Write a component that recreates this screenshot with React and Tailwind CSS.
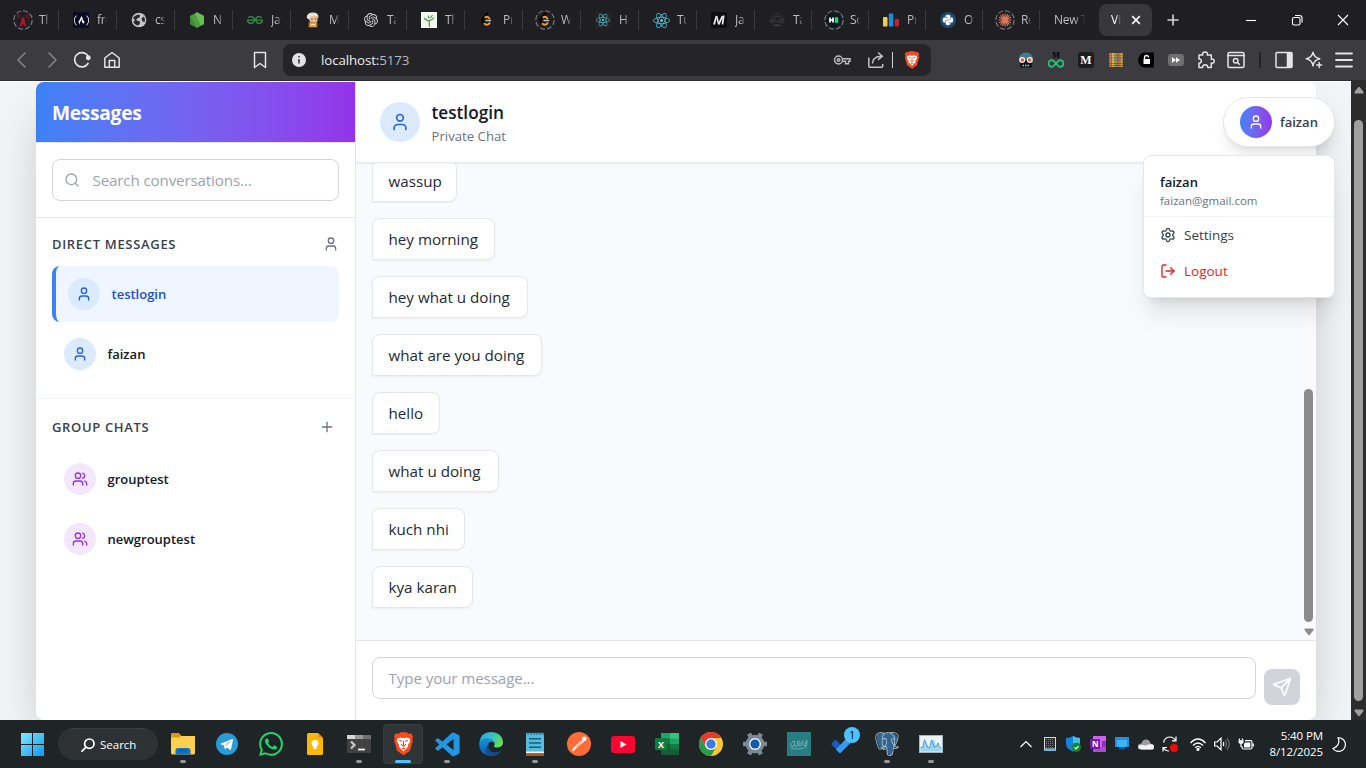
import React from "react";
import { User, Users, Search, Plus, Settings, LogOut, Send } from "lucide-react";
import {
  SiBrave, SiFreecodecamp, SiGeeksforgeeks, SiOpenai, SiReact,
  SiWhatsapp, SiPostgresql,
} from "react-icons/si";
import { BiLogoVisualStudio } from "react-icons/bi";
import { FaPython } from "react-icons/fa";

/* ---------- tab favicons ---------- */

function Ring({ children }) {
  return (
    <svg width="20" height="20" viewBox="0 0 20 20" fill="none">
      <circle cx="10" cy="10" r="9.2" stroke="#77777b" strokeWidth="1.2" strokeDasharray="5.2 2" />
      {children}
    </svg>
  );
}

const leet = (
  <g fill="none" strokeLinecap="round">
    <path d="M10.5 3.500 5.600 8.600Q4.400 10 5.600 11.600L8 14.500" stroke="#050505" strokeWidth="2" />
    <path d="M8.300 7.300q1.600-1.100 3.300.3l.8.8M7.500 13.700q2.200 2 4.200.3l.9-.9" stroke="#f0a01e" strokeWidth="1.900" />
    <path d="M9 10.600h4.500" stroke="#c2c2c2" strokeWidth="1.500" />
  </g>
);

const favicons = {
  tower: (
    <Ring>
      <path d="M8.900 7.500h2.200L12 12l1.600 4h-2.200L10 13.500 8.600 16H6.400L8 12Z" fill="#b3142c" />
      <path d="M7.200 4.400q-1.300 1.800 0 3.600M12.800 4.400q1.300 1.800 0 3.600M5.200 3.800q-2 2.600 0 5.300M14.800 3.800q2 2.600 0 5.300" stroke="#8d1526" strokeWidth="1" />
    </Ring>
  ),
  fcc: (
    <span className="flex size-4 items-center justify-center bg-[#0a0a23]">
      <SiFreecodecamp size={15} color="#fff" />
    </span>
  ),
  globe: (
    <svg width="16" height="16" viewBox="0 0 16 16">
      <circle cx="8" cy="8" r="7.300" fill="#c4c4c6" />
      <path d="M2 5.500Q5 2.500 8.500 2.500 9.500 5 7.500 6 5 6.500 5.500 8.500L9 9.500Q9.500 12 7 13.500 3 12.500 2.500 9.500l1.500-1ZM10.500 6.500l2.500-2q1.700 3 .8 5.500l-2.300-.5Z" fill="#29292d" />
    </svg>
  ),
  node: (
    <svg width="16" height="16" viewBox="0 0 16 16">
      <path d="M8 .2 15 4v8l-7 3.900L1 12V4Z" fill="#4f9e43" />
      <path d="M8 .2 15 4v8l-3 1.700L6 1.400Z" fill="#6bbd4f" />
      <path d="M1 4 8 15.900 1 12Z" fill="#3c873a" />
    </svg>
  ),
  gfg: <SiGeeksforgeeks size={16} color="#2f8d46" />,
  person: (
    <svg width="16" height="16" viewBox="0 0 16 16">
      <path d="M3.500 15.500V10h9v5.500Z" fill="#8a5a22" />
      <path d="M4.500 11h7v4h-7Z" fill="#e8a33c" />
      <rect x="4.500" y="2.500" width="8" height="8" rx="2" fill="#e9b987" />
      <path d="M1.800 6Q1.500 1 7 .5q6.500-.5 6.500 5L12.500 6l-.5-2L6 4.500 4.500 8Z" fill="#e4e2dc" />
      <path d="M6.500 7h1M10 7h1" stroke="#333" />
      <path d="M6 12.500h4" stroke="#fff3d6" />
    </svg>
  ),
  openai: <SiOpenai size={14} color="#d4d4d6" />,
  plant: (
    <svg width="16" height="16" viewBox="0 0 16 16">
      <rect width="16" height="16" fill="#f2f8ee" />
      <path d="M8.500 15q-.8-4 0-7M8.300 9Q5.500 8.500 3 6M8.500 8.500q3-.5 4.500-3M8 6.500 7.300 3.500M9.500 6l2-3" stroke="#4d9455" strokeWidth="1.200" fill="none" />
    </svg>
  ),
  leet: (
    <svg width="20" height="20" viewBox="0 0 20 20">{leet}</svg>
  ),
  leetRing: <Ring>{leet}</Ring>,
  react: (
    <span className="flex size-4 items-center justify-center bg-[#232323]">
      <SiReact size={14} color="#4fb3c8" />
    </span>
  ),
  reactBig: <SiReact size={17} color="#4fc3dc" />,
  medium: (
    <svg width="16" height="16" viewBox="0 0 16 16">
      <rect width="16" height="16" fill="#0d0d10" />
      <path d="m3 12.500 2.500-8.500M7.500 12.500l4-8.300M11.500 12.500l1.200-9" stroke="#e8e8ea" strokeWidth="1.800" fill="none" />
      <path d="m5.600 4 2 8" stroke="#e8e8ea" strokeWidth="1.500" />
    </svg>
  ),
  dim: (
    <svg width="16" height="16" viewBox="0 0 16 16" fill="none" stroke="#3d3d41">
      <circle cx="8" cy="7" r="5.500" strokeDasharray="2 1" />
      <circle cx="8" cy="7" r="3" />
      <circle cx="2.500" cy="9" r="1.700" />
      <circle cx="13.500" cy="9" r="1.700" />
      <path d="M4 13.500h8" />
    </svg>
  ),
  hacker: (
    <Ring>
      <circle cx="10" cy="10" r="7.500" fill="#071c22" />
      <path d="M6 7.500v5M9 7.500v5M6 10h3" stroke="#fff" strokeWidth="1.700" />
      <rect x="10.800" y="7.300" width="3.400" height="5.400" fill="#1fe26b" />
    </Ring>
  ),
  bars: (
    <svg width="16" height="16" viewBox="0 0 16 16">
      <rect x="0" y="5" width="4.500" height="9.500" rx="1" fill="#fbc94b" />
      <rect x="5.800" y="1.500" width="4.500" height="13" rx="1" fill="#1f8dd6" />
      <rect x="11.600" y="7" width="4.400" height="7.500" rx="1" fill="#c22033" />
    </svg>
  ),
  python: (
    <span className="flex size-4 items-center justify-center rounded-full bg-[#1d4a6b]">
      <FaPython size={12} color="#fff" />
    </span>
  ),
  claude: (
    <Ring>
      <path d="M10 3.500v13M3.500 10h13M5.400 5.400l9.200 9.200M14.600 5.400l-9.200 9.200M7.300 4l5.400 12M12.700 4 7.300 16M4 7.300l12 5.400M4 12.700l12-5.400" stroke="#d97757" strokeWidth="1.200" />
    </Ring>
  ),
};

const tabs = [
  ["tower", "Th"], ["fcc", "fre"], ["globe", "css"], ["node", "No"], ["gfg", "Jav"],
  ["person", "My"], ["openai", "Ta"], ["plant", "Th"], ["leet", "Pr"], ["leetRing", "W"],
  ["react", "Ho"], ["reactBig", "Tu"], ["medium", "Ja"], ["dim", "Ta"], ["hacker", "So"],
  ["bars", "Pr"], ["python", "O"], ["claude", "Re"],
];

function Tab({ icon, label, narrow }) {
  return (
    <div className={(narrow ? "w-[57px]" : "w-[58px]") + " flex h-5 shrink-0 items-center border-r border-[#3a3a3e] pl-3"}>
      <span className="flex w-5 shrink-0 items-center justify-center">{favicons[icon]}</span>
      <span className="ml-1.5 w-2.5 overflow-hidden whitespace-nowrap text-[12px] tracking-[-0.3px] text-[#bdbdc1] mask-r-from-60%">{label}</span>
    </div>
  );
}

function TabStrip() {
  return (
    <div className="flex h-10 shrink-0 items-center bg-[#1f1e23] pl-px">
      {tabs.map(([icon, label], i) => (
        <Tab key={i} icon={icon} label={label} narrow={i > 12} />
      ))}
      <span className="ml-3.5 w-8 overflow-hidden whitespace-nowrap text-[12px] tracking-[-0.3px] text-[#bdbdc1] mask-r-from-60%">New Tab</span>
      <div className="ml-[13px] flex h-8 w-[53px] items-center rounded-lg bg-[#38373c] pl-3 text-white">
        <span className="w-2.5 overflow-hidden text-[12px] mask-r-from-50%">Vi</span>
        <svg className="ml-2.5" width="10" height="10" viewBox="0 0 10 10" stroke="#f2f2f2" strokeWidth="1.700">
          <path d="m1.200 1.200 7.600 7.600M8.800 1.200 1.200 8.800" />
        </svg>
      </div>
      <svg className="ml-[15px]" width="12" height="12" viewBox="0 0 12 12" stroke="#d6d6d8" strokeWidth="1.600">
        <path d="M6 .5v11M.5 6h11" />
      </svg>
      <div className="ml-auto flex text-white">
        {[
          <path key="a" d="M1 6.500h10" />,
          <g key="b"><rect x="1.500" y="3.500" width="7.500" height="7.500" rx="1.500" /><path d="M4 1.500h4.500q2.500 0 2.500 2.500v4.500" /></g>,
          <path key="c" d="m1 1 10 10M11 1 1 11" />,
        ].map((p, i) => (
          <span key={i} className="flex w-[46px] justify-center">
            <svg width="12" height="12" viewBox="0 0 12 12" fill="none" stroke="#fff" strokeWidth="1.100">{p}</svg>
          </span>
        ))}
      </div>
    </div>
  );
}

/* ---------- toolbar ---------- */

function ToolButton({ children }) {
  return <span className="flex w-[30px] shrink-0 items-center justify-center">{children}</span>;
}

function Line({ size = 18, width = 1.5, color = "#e4e4e7", children }) {
  return (
    <svg width={size} height={size} viewBox="0 0 18 18" fill="none" stroke={color} strokeWidth={width} strokeLinejoin="round" strokeLinecap="round">
      {children}
    </svg>
  );
}

function Toolbar() {
  return (
    <div className="flex h-[41px] shrink-0 items-center border-b border-[#2e2d31] bg-[#3c3b40] pl-[7px]">
      <ToolButton><Line color="#85858a"><path d="m12 2-7 7 7 7" /></Line></ToolButton>
      <ToolButton><Line color="#85858a"><path d="m6 2 7 7-7 7" /></Line></ToolButton>
      <ToolButton>
        <Line width={1.7}>
          <path d="M15 12.500A7.200 7.200 0 1 1 15.500 6" />
          <circle cx="15.300" cy="6.800" r="1.600" fill="#e4e4e7" />
        </Line>
      </ToolButton>
      <ToolButton>
        <Line><path d="M1.800 7 9 1.500 16.200 7v9.200H1.800ZM6.300 16V9.500h5.400V16" /></Line>
      </ToolButton>
      <span className="ml-[118px] flex w-[30px] justify-center">
        <Line><path d="M3.500 1.500h11v15L9 12.500l-5.500 4Z" /></Line>
      </span>
      <div className="ml-2 flex h-8 w-[648px] items-center rounded-lg bg-[#252428] pl-2">
        <svg width="16" height="16" viewBox="0 0 16 16">
          <circle cx="8" cy="8" r="7" fill="#e3e3e6" />
          <path d="M8 7v4.500M8 4v1.600" stroke="#3c3b40" strokeWidth="1.600" />
        </svg>
        <span className="ml-3.5 pt-px text-[13.3px] tracking-[-0.1px] text-[#ececee]">localhost:<span className="text-[#b9b9bd]">5173</span></span>
        <span className="ml-auto flex items-center pr-[11px]">
          <svg width="18" height="18" viewBox="0 0 18 18" fill="none" stroke="#bcbcc0" strokeWidth="1.400">
            <circle cx="5.500" cy="9" r="4" />
            <circle cx="5.500" cy="9" r="1.300" />
            <path d="M9.300 7.700H17v2.600h-1.500v2.400h-3v-2.400H9.300" />
          </svg>
          <svg className="ml-4" width="18" height="18" viewBox="0 0 18 18" fill="none" stroke="#c2c2c6" strokeWidth="1.500">
            <path d="M1.800 6.500V15q0 1.200 1.200 1.200h11.500q1.200 0 1.200-1.200v-2M5.500 12.500Q5.500 5.500 14.500 5.200M11 1.500l4.300 3.700-4.300 3.700" />
          </svg>
          <span className="ml-[7px] h-4 w-px bg-[#d0d0d3]" />
          <BraveLion size={16} className="ml-[11px]" />
        </span>
      </div>
      <div className="ml-auto flex items-center pr-[7px]">
        <ToolButton>
          <svg width="16" height="16" viewBox="0 0 16 16">
            <path d="M1 8Q1 .5 8 .5T15 8Z" fill="#3f7d92" />
            <rect x="2" y="9" width="12" height="6.500" rx="1" fill="#101418" />
            <path d="M4.500 13.500h7" stroke="#9ad0e0" strokeWidth="1.500" strokeDasharray="1.500 1" />
            <circle cx="4.200" cy="8" r="3" fill="#f7ece6" /><circle cx="11.800" cy="8" r="3" fill="#f7ece6" />
            <circle cx="4.400" cy="8" r="1.700" fill="#e2583c" /><circle cx="11.600" cy="8" r="1.700" fill="#e2583c" />
          </svg>
        </ToolButton>
        <ToolButton>
          <span className="flex flex-col items-center">
            <b className="font-['Liberation_Serif',serif] text-[8px] leading-[7px] text-black">M</b>
            <svg width="16" height="9" viewBox="0 0 16 9" fill="none" stroke="#1fc97a" strokeWidth="1.800">
              <path d="M8 4.500C6 2 5 1.200 3.800 1.200a3.200 3.200 0 0 0 0 6.600C5 7.800 6 7 8 4.500s3-3.300 4.200-3.300a3.200 3.200 0 0 1 0 6.600C11 7.800 10 7 8 4.500Z" />
            </svg>
          </span>
        </ToolButton>
        <ToolButton>
          <b className="flex size-4 items-center justify-center rounded-[3px] bg-[#1c1c1c] font-['Liberation_Serif',serif] text-[12px] text-white">M</b>
        </ToolButton>
        <ToolButton>
          <svg width="14" height="14" viewBox="0 0 14 14" strokeWidth="2.600" strokeDasharray="2.200 .4">
            <path d="M1.500 0v14" stroke="#d07a4e" /><path d="M4.300 0v14" stroke="#e0b552" /><path d="M7 0v14" stroke="#79a058" /><path d="M9.700 0v14" stroke="#d65f58" /><path d="M12.500 0v14" stroke="#c9a43e" />
          </svg>
        </ToolButton>
        <ToolButton>
          <svg width="16" height="16" viewBox="0 0 16 16">
            <path d="M16 .5v15H7A7 7.500 0 0 1 7 .5Z" fill="#000" />
            <rect x="5.500" y="7" width="6.500" height="5" fill="#fff" />
            <path d="M6.500 7V5.500a2 2 0 0 1 4 0" stroke="#fff" strokeWidth="1.300" fill="none" />
          </svg>
        </ToolButton>
        <ToolButton>
          <svg width="16" height="12" viewBox="0 0 16 12">
            <rect width="16" height="12" rx="3" fill="#707072" />
            <path d="m4 3.300 4 2.700-4 2.700ZM8 3.300 12 6 8 8.700Z" fill="#fff" />
          </svg>
        </ToolButton>
        <ToolButton>
          <Line><path d="M2 4h3.800q-.9-3 2.200-3t2.200 3H14.300v4.300q2.900-.6 2.900 1.900t-2.900 1.900v4.400H10.800q-.2-2.700-2.600-2.700T5.600 16.500H2v-4.200q2.400-.200 2.400-2.200T2 8Z" /></Line>
        </ToolButton>
        <ToolButton>
          <Line><rect x="1" y="1.500" width="16" height="15" rx="1.500" /><path d="M1 4.500h16" /><circle cx="8.700" cy="9.700" r="2.300" /><path d="m10.500 11.500 1.800 1.800" /></Line>
        </ToolButton>
        <span className="mx-2 h-4 w-0.5 bg-[#252428]" />
        <ToolButton>
          <Line><rect x="1" y="1.500" width="16" height="15" rx="1" /><path d="M12.500 2v14h4V2Z" fill="#e4e4e7" /></Line>
        </ToolButton>
        <ToolButton>
          <Line width={1.4}><path d="M8 1.200q1 5.600 6.800 6.600Q9 8.800 8 15 7 8.800 1.200 7.800 7 6.800 8 1.200ZM14.200 11.500v5M11.700 14h5" /></Line>
        </ToolButton>
        <ToolButton>
          <Line width={1.8}><path d="M1 2.500h16M1 9h16M1 15.500h16" /></Line>
        </ToolButton>
      </div>
    </div>
  );
}

function BraveLion({ size, className }) {
  return (
    <svg className={className} width={size} height={size * 1.12} viewBox="0 0 22 24">
      <path d="m6 1.500 1.800-1.500h6.400L16 1.500l3-.3 2 3-.8 2 .6 2-3 11L11 24l-6.800-4.800-3-11 .6-2-.8-2 2-3Z" fill="#fb4a1c" />
      <path d="M4.500 6.500 8 5.500l3 .7 3-.7 3.500 1 .5 3-2.500 4 .5 1.500-2 2-3 3-3-3-2-2 .5-1.500L4 9.500Z" fill="#fff" />
      <path d="m6.500 8.500 3 .8M15.500 8.500l-3 .8M11 9v4.500M8.500 12.500 11 15l2.500-2.500M9.500 17h3" stroke="#fa3a16" strokeWidth="1.100" fill="none" />
    </svg>
  );
}

/* ---------- sidebar ---------- */

function Conversation({ name, group, active }) {
  const Icon = group ? Users : User;
  return (
    <div className={"flex h-14 items-center rounded-lg px-3 " + (active ? "border-l-4 border-[#3b82f6] bg-[#eff6ff]" : "")}>
      <span className={"flex size-8 items-center justify-center rounded-full " + (group ? "bg-[#f3e8ff] text-[#9333ea]" : "bg-[#dbeafe] text-[#2563eb]")}>
        <Icon size={16} />
      </span>
      <span className={"ml-[11.5px] pt-0.5 text-[13px] font-semibold " + (active ? "text-[#1d4ed8]" : "text-[#111827]")}>{name}</span>
    </div>
  );
}

function Sidebar() {
  return (
    <aside className="flex w-80 shrink-0 flex-col border-r border-[#e5e7eb] bg-white">
      <div className="flex h-[61px] shrink-0 items-center border-b border-[#e5e7eb] bg-linear-to-r from-[#3b82f6] to-[#9333ea] bg-clip-padding px-4">
        <h1 className="pt-0.5 text-[19.2px] font-bold tracking-[-0.3px] text-white">Messages</h1>
      </div>
      <div className="border-b border-[#e5e7eb] p-4">
        <div className="flex h-[42px] items-center rounded-lg border border-[#d1d5db] pl-[11px] text-[#9ca3af]">
          <Search size={16} />
          <span className="ml-[12.5px] text-[15.2px] tracking-[-0.16px]">Search conversations...</span>
        </div>
      </div>
      <section className="border-b border-[#f3f4f6] p-4">
        <div className="mb-3 flex h-5 items-center justify-between">
          <h2 className="pt-px text-[13px] font-semibold tracking-[0.68px] text-[#374151]">DIRECT MESSAGES</h2>
          <User size={16} color="#6b7280" />
        </div>
        <div className="flex flex-col gap-1">
          <Conversation name="testlogin" active />
          <Conversation name="faizan" />
        </div>
      </section>
      <section className="p-4">
        <div className="mb-3 flex h-6 items-center justify-between">
          <h2 className="pt-px text-[13px] font-semibold tracking-[0.65px] text-[#374151]">GROUP CHATS</h2>
          <span className="p-1"><Plus size={16} color="#6b7280" /></span>
        </div>
        <div className="flex flex-col gap-1">
          <Conversation name="grouptest" group />
          <Conversation name="newgrouptest" group />
        </div>
      </section>
    </aside>
  );
}

/* ---------- chat ---------- */

const messages = [
  ["wassup", "w-[85px]"],
  ["hey morning", "w-[123px]"],
  ["hey what u doing", "w-[156px]"],
  ["what are you doing", "w-[170px]"],
  ["hello", "w-[68px]"],
  ["what u doing", "w-[127px]"],
  ["kuch nhi", "w-[93px]"],
  ["kya karan", "w-[101px]"],
];

function Chat() {
  return (
    <main className="flex min-w-0 flex-1 flex-col bg-white">
      <header className="z-10 flex h-[81px] shrink-0 items-center border-b border-[#e5e7eb] bg-white px-6 shadow-xs">
        <span className="flex size-10 items-center justify-center rounded-full bg-[#dbeafe] text-[#2563eb]">
          <User size={20} />
        </span>
        <div className="ml-[11.5px]">
          <h2 className="pt-px text-[17.2px] leading-[27px] font-semibold text-[#111827]">testlogin</h2>
          <p className="text-[13.2px] leading-5 text-[#6b7280]">Private Chat</p>
        </div>
      </header>
      <div className="flex min-h-0 flex-1 bg-[#f9fafb]">
        <div className="flex flex-1 flex-col justify-end gap-4 overflow-hidden px-4 pb-8">
          {messages.map(([text, w]) => (
            <div key={text} className={w + " h-[42px] shrink-0 rounded-lg rounded-bl-none border border-[#e5e7eb] bg-white pl-[15.5px] text-[15.2px] leading-10 whitespace-nowrap text-[#1f2937] shadow-xs"}>
              {text}
            </div>
          ))}
        </div>
        <div className="flex w-[15px] flex-col items-center justify-end bg-[#fafafa]">
          <div className="mb-1.5 h-[233px] w-[9px] rounded-full bg-[#8b8b8b]" />
          <svg className="mb-1" width="10" height="8" viewBox="0 0 10 8"><path d="M.8.500h8.400Q10 1.500 9.200 2.500L5.800 6.800q-.8 1-1.600 0L.8 2.500Q0 1.500.8.500Z" fill="#8b8b8b" /></svg>
        </div>
      </div>
      <footer className="flex h-20 shrink-0 items-start gap-2 border-t border-[#e5e7eb] px-4 pt-4">
        <div className="flex h-[42px] flex-1 items-center rounded-lg border border-[#d1d5db] px-[15.5px] text-[15.2px] tracking-[-0.12px] text-[#9ca3af]">
          Type your message...
        </div>
        <button className="mt-3 flex size-9 items-center justify-center rounded-lg bg-[#d1d5db] text-white">
          <Send size={20} />
        </button>
      </footer>
    </main>
  );
}

function AccountMenu() {
  return (
    <div className="absolute top-[15px] right-[16.500px] z-20 flex flex-col items-end gap-2">
      <div className="flex h-[50px] w-[111.500px] items-center rounded-full border border-[#e5e7eb] bg-white pl-4 shadow-lg">
        <span className="flex size-8 items-center justify-center rounded-full bg-linear-to-r from-[#3b82f6] to-[#9333ea] text-white">
          <User size={16} />
        </span>
        <span className="ml-2 pt-0.5 text-[13px] font-semibold text-[#374151]">faizan</span>
      </div>
      <div className="w-[191.500px] rounded-lg border border-[#e5e7eb] bg-white py-2 shadow-xl">
        <div className="border-b border-[#f3f4f6] px-4 py-2">
          <p className="text-[13px] leading-5 font-semibold text-[#111827]">faizan</p>
          <p className="pt-px text-[11.500px] leading-[15px] text-[#6b7280]">faizan@gmail.com</p>
        </div>
        <div className="flex h-9 items-center gap-2 px-4 text-[13.500px] text-[#374151]"><Settings size={16} /><span className="pt-px">Settings</span></div>
        <div className="flex h-9 items-center gap-2 px-4 text-[13.500px] text-[#dc2626]"><LogOut size={16} /><span className="pt-px">Logout</span></div>
      </div>
    </div>
  );
}

function PageScrollbar() {
  return (
    <div className="flex w-[15px] shrink-0 flex-col items-center bg-[#2c2c2c] pt-[5px]">
      <svg width="10" height="8" viewBox="0 0 10 8"><path d="M.8 7.500h8.400q.8-1 0-2L5.800 1.200q-.8-1-1.600 0L.8 5.500q-.8 1 0 2Z" fill="#9f9f9f" /></svg>
      <div className="mt-[26px] h-[581px] w-[9px] rounded-full bg-[#9f9f9f]" />
      <svg className="mt-2" width="10" height="8" viewBox="0 0 10 8"><path d="M.8.500h8.400Q10 1.500 9.200 2.500L5.800 6.800q-.8 1-1.600 0L.8 2.500Q0 1.500.8.500Z" fill="#9f9f9f" /></svg>
    </div>
  );
}

/* ---------- taskbar ---------- */

const apps = [
  { run: true, icon: (
    <svg width="24" height="24" viewBox="0 0 24 24">
      <path d="M0 2q0-1 1-1h7l2.500 3V7H0Z" fill="#d99a0b" />
      <path d="M0 5.500h8L10 4h14v17q0 1.500-1.500 1.500h-21Q0 22.500 0 21Z" fill="#ffd04f" />
      <path d="M4.500 22.500v-4q0-2.500 2.500-2.500h10q2.500 0 2.500 2.500v4Z" fill="#1173c7" />
      <path d="M8 18.500h8" stroke="#0b5aa3" strokeWidth="1.300" />
    </svg>) },
  { icon: (
    <svg width="22" height="22" viewBox="0 0 22 22">
      <circle cx="11" cy="11" r="11" fill="#2a9bd8" />
      <path d="m4.500 10.800 11.800-4.700q.9-.3.700.8l-2 9.400q-.2.900-1 .4l-3-2.200-1.500 1.500q-.6.500-.8-.4l-1-3.300-3-1q-1-.2-.2-.5Z" fill="#fff" />
      <path d="m8.500 12.300 6-4-4.500 4.800" stroke="#9cc9e5" fill="none" />
    </svg>) },
  { icon: <SiWhatsapp size={24} color="#25d366" /> },
  { icon: (
    <svg width="16" height="22" viewBox="0 0 16 22">
      <path d="M1.500 0H11l5 5v15.500q0 1.500-1.500 1.500h-13Q0 22 0 20.500v-19Q0 0 1.500 0Z" fill="#fbb806" /><path d="M11 0l5 5h-5Z" fill="#f0930a" />
      <circle cx="8" cy="10.500" r="3.400" fill="#fff" /><path d="M6.500 13h3v3h-3Z" fill="#fff" />
    </svg>) },
  { run: true, icon: (
    <svg width="24" height="18" viewBox="0 0 24 18">
      <rect width="24" height="18" rx="1" fill="#414141" /><path d="M0 0h8v4H0Z" fill="#d7d7d7" /><path d="M8 0h8v4H8Z" fill="#999" /><path d="M16 0h8v4h-8Z" fill="#707070" />
      <path d="m4 6.500 3.500 3.500L4 13.500" stroke="#c9c9c9" strokeWidth="2.200" fill="none" /><path d="M11 14.500h7" stroke="#f2f2f2" strokeWidth="1.800" />
    </svg>) },
  { active: true, icon: <BraveLion size={21} /> },
  { run: true, icon: <BiLogoVisualStudio size={29} color="#2196e3" /> },
  { icon: (
    <svg width="24" height="24" viewBox="0 0 24 24">
      <defs>
        <linearGradient id="eg" x1="0" x2="1" y1="0" y2=".4"><stop offset="0" stopColor="#2aa5e8" /><stop offset=".6" stopColor="#35c4c0" /><stop offset="1" stopColor="#64db5c" /></linearGradient>
        <linearGradient id="eb" x1="0" x2="0" y1="0" y2="1"><stop offset="0" stopColor="#1896de" /><stop offset="1" stopColor="#0b59a8" /></linearGradient>
      </defs>
      <path d="M.3 11Q1.500 0 12 0q11 .3 12 10 .2 5-5 5.500-4.500.3-4-1.500 1.500-2.500-.5-4.500Q10 4.500.3 11Z" fill="url(#eg)" />
      <path d="M.2 12Q1 6 7.500 6q6.500.2 8 5-4-2.500-6 .5-2.500 8 6 9.500 3.500.3 6-1-3.500 4-9 4Q.5 23.500.2 12Z" fill="url(#eb)" />
      <path d="M9.500 11.500q-1.500 7.500 5 9 4 .6 8-2-3.500 6-11 5.400Q3 20 9.500 11.500Z" fill="#124d8f" />
    </svg>) },
  { run: true, icon: (
    <svg width="18" height="24" viewBox="0 0 18 24">
      <rect y="1" width="18" height="19" fill="#55bddb" /><path d="M2 .2v2.500M5 .2v2.500M8 .2v2.500M11 .2v2.500M14 .2v2.500M17 .2v2.500" stroke="#1c6a86" strokeWidth="1.400" />
      <path d="M3 6.800h12M3 11h12M3 15.200h12" stroke="#175f7c" strokeWidth="1.600" /><rect y="19.500" width="18" height="2" fill="#f2f2f2" /><rect y="21.500" width="18" height="2.500" fill="#a85a1c" />
    </svg>) },
  { icon: (
    <svg width="24" height="24" viewBox="0 0 24 24">
      <circle cx="12" cy="12" r="12" fill="#ff6c37" /><circle cx="17.300" cy="6.700" r="2.300" fill="#fff" />
      <path d="m6 18 6.500-6.500 3-2" stroke="#fff" strokeWidth="2.400" strokeLinecap="round" /><path d="m9 15 6-6" stroke="#ff6c37" strokeWidth=".6" />
    </svg>) },
  { icon: (
    <svg width="24" height="17" viewBox="0 0 24 17"><rect width="24" height="17" rx="3" fill="#ff0433" /><path d="m9.500 5 6 3.500-6 3.500Z" fill="#fff" /></svg>) },
  { icon: (
    <span className="relative flex size-6 items-center">
      <svg width="24" height="22" viewBox="0 0 24 22">
        <path d="M6 0h18v22H6Z" fill="#21a366" /><path d="M15 0h9v5.500h-9Z" fill="#33c481" /><path d="M6 5.500h9V11H6Z" fill="#107c41" /><path d="M6 11h18v11H6Z" fill="#185c37" /><path d="M15 11h9v5.500h-9Z" fill="#107c41" />
        <rect y="5" width="12" height="12" rx="1" fill="#107c41" />
      </svg>
      <b className="absolute left-[3px] text-[9px] leading-none text-white">X</b>
    </span>) },
  { icon: (
    <svg width="24" height="24" viewBox="0 0 24 24">
      <circle cx="12" cy="12" r="12" fill="#fcc934" /><path d="M1.600 6A12 12 0 0 1 22.400 6H12L7 15Z" fill="#e33b2e" /><path d="M1.600 6A12 12 0 0 0 12 24l5.200-9L12 17.500 6.800 15Z" fill="#2a9b46" />
      <circle cx="12" cy="12" r="6" fill="#fff" /><circle cx="12" cy="12" r="4.700" fill="#3b7ded" />
    </svg>) },
  { icon: (
    <svg width="24" height="24" viewBox="0 0 24 24">
      <circle cx="12" cy="12" r="9.300" fill="#7c8894" />
      <path d="M0 12h24M6 1.600l12 20.800M18 1.600 6 22.400" stroke="#7c8894" strokeWidth="4.500" />
      <circle cx="12" cy="12" r="6" fill="#eef1f4" /><circle cx="12" cy="12" r="4.600" fill="#0e5cab" />
    </svg>) },
  { icon: (
    <svg width="24" height="24" viewBox="0 0 24 24">
      <rect width="24" height="24" fill="#267e83" />
      <path d="M4 11q-1 4 1 4t3-3M7 9l1 5q2 2 3-1l-1-4M12 8v6q2 1 3-2M16 8q-1 6 2 6l1-5M20 8q1 5-2 8M4 16.500q6 1.500 13-.5M5 9.500h3M13 11h3" stroke="#7fb8ba" strokeWidth=".8" fill="none" />
    </svg>) },
  { badge: true, icon: (
    <svg width="24" height="20" viewBox="0 0 24 20">
      <path d="m0 10 4.500-4.500L13.500 14.500 9 19.500Z" fill="#185abd" /><path d="m5 15.500 4 4L24 4.500 19.500 0Z" fill="#3a9af0" />
    </svg>) },
  { run: true, icon: (
    <span className="relative flex size-6 items-center justify-center">
      <svg className="absolute inset-0" width="24" height="24" viewBox="0 0 24 24">
        <path d="M2 3q3-3 7-1.500Q16-.5 20 2q4 3 1 9l-3 4-1 7q-2 2.500-4 0l-.5-6-2-1-1 2H6Q1 12 2 3Z" fill="#336791" />
      </svg>
      <SiPostgresql className="relative" size={24} color="#b9cbd9" />
    </span>) },
  { run: true, icon: (
    <svg width="24" height="18" viewBox="0 0 24 18">
      <rect width="24" height="18" fill="#eaf3fa" />
      <path d="M1.500 16.500v-4l2.500-.5 1.500-7.500L9 12l1.500 1 2-7L15 4.500l2 7.500 2-3 1.500 3 2 1v3.500Z" fill="#9ad5f4" />
      <path d="m1.500 12.500 2.500-.5 1.500-7.500L9 13h1.500l2-8L15 12h2l2-4 1.500 4 2 1" stroke="#4a9fd3" strokeWidth="1" fill="none" /><rect x=".5" y=".5" width="23" height="17" fill="none" stroke="#aab6bf" />
    </svg>) },
];

function TrayCell({ children }) {
  return <span className="flex w-6 shrink-0 items-center justify-center">{children}</span>;
}

function Taskbar() {
  return (
    <div className="flex h-12 shrink-0 items-center bg-[#1f2427] pl-[21px] text-white">
      <svg width="23" height="23" viewBox="0 0 23 23">
        <defs><linearGradient id="wg" x1="0" y1="0" x2="1" y2="1"><stop offset="0" stopColor="#7cebff" /><stop offset="1" stopColor="#1296f5" /></linearGradient></defs>
        <path d="M0 0h11v11H0ZM12 0h11v11H12ZM0 12h11v11H0ZM12 12h11v11H12Z" fill="url(#wg)" />
      </svg>
      <div className="ml-3.5 flex h-8 w-[100px] items-center rounded-full border-t border-[#3b3f42] bg-[#2e3235] pl-[23px]">
        <svg width="14" height="14" viewBox="0 0 14 14" fill="none" stroke="#fff" strokeWidth="1.700" strokeLinecap="round"><circle cx="8.300" cy="5.700" r="4.700" /><path d="m5 9.200-4 4" /></svg>
        <span className="ml-[5px] pt-px text-[11.5px]">Search</span>
      </div>
      <div className="ml-[3px] flex">
        {apps.map((a, i) => (
          <div key={i} className="relative flex h-12 w-11 items-center justify-center">
            <div className={"relative flex h-10 w-10 items-center justify-center rounded " + (a.active ? "border border-[#3a3e41] bg-[#2f3437]" : "")}>
              {a.icon}
              {a.badge && <span className="absolute top-[3px] right-[3px] flex size-4 items-center justify-center rounded-full bg-[#4cc2ff] text-[10px] text-black">1</span>}
            </div>
            {a.run && <span className="absolute bottom-[5px] h-[3px] w-1.5 rounded-full bg-[#94989a]" />}
            {a.active && <span className="absolute bottom-[5px] h-[3px] w-4 rounded-full bg-[#4cc2ff]" />}
          </div>
        ))}
      </div>
      <div className="ml-auto flex items-center pr-[11px]">
        <TrayCell><svg width="12" height="8" viewBox="0 0 12 8" fill="none" stroke="#fff" strokeWidth="1.200"><path d="m.5 7 5.500-5.500L11.500 7" /></svg></TrayCell>
        <TrayCell><svg width="12" height="14" viewBox="0 0 12 14"><rect width="12" height="14" fill="#d8dadb" /><rect x="1" y="1" width="10" height="10.500" fill="#2b2e30" /><path d="M2.500 2v9M4.500 2v9M6.500 2v9M8.500 2v9" stroke="#77797b" strokeDasharray="1 1" /><path d="M0 13h12" stroke="#5fb8f0" strokeWidth="2" /></svg></TrayCell>
        <TrayCell><svg width="16" height="16" viewBox="0 0 16 16"><path d="M7 0q3 2 7 2v6q0 5-7 7.500Q0 13 0 8V2q4 0 7-2Z" fill="#1684dc" /><path d="M7 0q3 2 7 2v5.500H7Z" fill="#46bdf2" /><circle cx="10.500" cy="11.300" r="4.500" fill="#0f8a1f" /><path d="m8.500 11.300 1.500 1.500 2.500-2.700" stroke="#fff" strokeWidth="1.200" fill="none" /></svg></TrayCell>
        <TrayCell>
          <span className="relative flex size-4 items-center">
            <svg width="16" height="16" viewBox="0 0 16 16"><path d="M3 0h13v16H3Z" fill="#ca64ea" /><path d="M12 5h4v6h-4Z" fill="#9332bf" /><path d="M3 11h13v5H3Z" fill="#ae4bd5" /><rect y="3" width="10" height="10" rx="1" fill="#7719aa" /></svg>
            <b className="absolute left-[2px] text-[8px] leading-none">N</b>
          </span>
        </TrayCell>
        <TrayCell><svg width="16" height="16" viewBox="0 0 16 16"><path d="M1 1h14v10H1Z" fill="#1f8fe0" /><path d="M3 4h10v6l-5 2-5-2Z" fill="#3cb4f5" /><path d="M5 11h6v2.500H5Z" fill="#0c5ca8" /></svg></TrayCell>
        <TrayCell><svg width="16" height="11" viewBox="0 0 16 11"><path d="M4 10.500Q0 10.500 0 7.500T3.500 4.500Q4.500.5 8 .5t4.500 4Q16 5 16 7.700t-3 2.800Z" fill="#9d9d9d" /><path d="M4 10.500Q0 10.500 0 8q1-3 4.500-2 3.500 1 5.500-.500Q16 4.500 16 7.700t-3 2.800Z" fill="#f3f3f3" /></svg></TrayCell>
        <TrayCell><svg width="16" height="16" viewBox="0 0 16 16"><path d="M1.500 6.500Q3 1 8 1q3.500 0 5.500 3.500M14 .5v4.300h-4M1 15.500v-4h4M1.500 12q2 3 5.500 3" stroke="#fff" strokeWidth="1.200" fill="none" /><circle cx="12" cy="12" r="4" fill="#f90606" /></svg></TrayCell>
        <span className="ml-1 flex">
          <TrayCell><svg width="16" height="13" viewBox="0 0 16 13" fill="none" stroke="#fff" strokeWidth="1.300"><path d="M.5 5Q8-3 15.500 5M3 7.500q5-5 10 0M5.200 9.800q2.800-2.800 5.600 0" /><circle cx="8" cy="11.300" r="1" fill="#fff" /></svg></TrayCell>
          <TrayCell><svg width="16" height="14" viewBox="0 0 16 14" fill="none" stroke="#fff" strokeWidth="1.200"><path d="M.7 5h2.500L7 1.200v11.600L3.200 9H.7ZM9 5q1.500 2 0 4" /><path d="M11 3.300q3 3.700 0 7.400M13 1.500q4.500 5.500 0 11" stroke="#6b6f71" /></svg></TrayCell>
          <TrayCell><svg width="16" height="13" viewBox="0 0 16 13" fill="none" stroke="#fff" strokeWidth="1.200"><path d="M7 2.700h5.500q1.500 0 1.500 1.500v5.300q0 1.500-1.500 1.500H5.500q-1.500 0-1.500-1.500V8" /><path d="M15.300 5.500v3" /><path d="M7 4.500h5.300v5H6V6Z" fill="#fff" stroke="none" /><path d="M1.500.5v2M4.500.5v2M3 6v3" /><path d="M.5 2.200h5v2.500Q3 7.500.5 4.700Z" fill="#fff" stroke="none" /></svg></TrayCell>
        </span>
        <div className="w-[65px] text-right text-[11.5px] leading-4 tracking-[-0.1px]">
          <div>5:40 PM</div>
          <div>8/12/2025</div>
        </div>
        <span className="flex w-8 justify-center"><svg width="14" height="15" viewBox="0 0 14 15" fill="none" stroke="#fff" strokeWidth="1.200"><path d="M6 .8A6.800 6.800 0 1 1 1 11.500 7.500 7.500 0 0 0 6 .8Z" /></svg></span>
      </div>
    </div>
  );
}

export default function App() {
  return (
    <div className="flex h-[768px] w-[1366px] flex-col overflow-hidden font-['Open_Sans','Noto_Sans',sans-serif]">
      <TabStrip />
      <Toolbar />
      <div className="flex min-h-0 flex-1 bg-[#f3f4f6]">
        <div className="relative flex min-w-0 flex-1 overflow-hidden border-t border-white bg-[#f3f4f6] pr-[35px] pl-9">
          <div className="flex flex-1 rounded-lg shadow-2xl">
            <div className="flex flex-1 overflow-hidden rounded-lg">
              <Sidebar />
              <Chat />
            </div>
          </div>
          <AccountMenu />
        </div>
        <PageScrollbar />
      </div>
      <Taskbar />
    </div>
  );
}
